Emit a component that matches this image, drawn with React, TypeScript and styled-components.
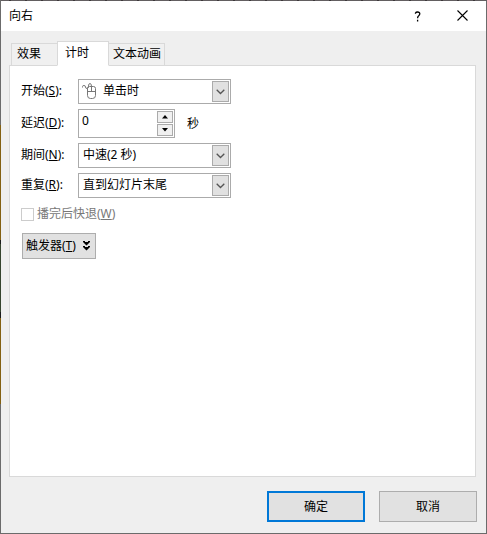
import React, { useState } from "react";
import styled, { createGlobalStyle, css } from "styled-components";

const GlobalStyle = createGlobalStyle`
  *, *::before, *::after { box-sizing: border-box; }
  body { margin: 0; background: #6b6b6b; }
  body, button, input, select {
    font-family: "Noto Sans", "Noto Sans CJK SC", sans-serif;
    font-size: 12px;
    line-height: 16px;
    color: #000;
  }
`;

const Frame = styled.div`
  min-height: 100vh;
  padding: 1px;
  display: flex;
  background:
    linear-gradient(
      #6b6b6b 125px, #846112 125px, #846112 240px, #1c1c1c 240px, #1c1c1c 244px,
      #36452f 244px, #36452f 312px, #1c1c1c 312px, #1c1c1c 318px,
      #846112 318px, #846112 404px, #6b6b6b 404px
    ) left / 1px 100% no-repeat,
    repeating-linear-gradient(90deg, #625e60 0 9px, #3c383a 9px 11px, #625e60 11px 16px) top / 100% 1px no-repeat,
    #6b6b6b;
`;

const Dialog = styled.main`
  flex: 1;
  display: flex;
  flex-direction: column;
  background: #efefef;
`;

const TitleBar = styled.header`
  display: flex;
  align-items: center;
  height: 30px;
  padding-left: 8px;
  background: #fff;
`;

const Title = styled.h1`
  flex: 1;
  margin: 0;
  font-size: 12px;
  font-weight: 400;
`;

const TitleButton = styled.button`
  display: grid;
  place-items: center;
  width: 46px;
  height: 28px;
  padding: 0;
  border: 0;
  background: none;
`;

const Content = styled.div`
  flex: 1;
  display: flex;
  flex-direction: column;
  padding: 10px 10px 0 8px;
`;

const TabList = styled.div`
  display: flex;
  align-items: flex-end;
  height: 25px;
  padding-left: 2px;
  margin-bottom: -1px;
`;

const Tab = styled.button<{ $active: boolean }>`
  height: 23px;
  padding: 0 4px 1px;
  margin-right: -1px;
  border: 1px solid #d9d9d9;
  background: #f0f0f0;
  white-space: nowrap;

  &:first-child { padding-right: 16px; padding-left: 5px; }
  &:last-child { padding-right: 3px; }

  ${({ $active }) =>
    $active &&
    css`
      z-index: 1;
      height: 25px;
      padding: 0 19px 2px 7px;
      border-bottom-color: #fff;
      background: #fff;
    `}
`;

const Panel = styled.section`
  flex: 1;
  padding: 13px 12px 20px 11px;
  border: 1px solid #d9d9d9;
  background: #fff;
`;

const Fields = styled.div`
  display: grid;
  grid-template-columns: 57px 153px auto;
  justify-content: start;
  align-items: center;
  row-gap: 5px;
`;

const FieldLabel = styled.label`
  grid-column: 1;
  padding-bottom: 2px;
  white-space: nowrap;
`;

const SelectBox = styled.div`
  display: grid;
  grid-template: 25px / 1fr 19px;
  align-items: center;

  > svg { pointer-events: none; }
`;

const SelectInput = styled.select<{ $withIcon?: boolean }>`
  grid-area: 1 / 1 / 2 / 3;
  width: 100%;
  height: 25px;
  padding: 0 20px 1px ${({ $withIcon }) => ($withIcon ? "24px" : "4px")};
  border: 1px solid #ababab;
  border-radius: 0;
  background: #fff;
  appearance: none;
`;

const MouseGlyph = styled.svg`
  grid-area: 1 / 1;
  margin-left: 3px;
`;

const DropMark = styled.span`
  grid-area: 1 / 2;
  display: grid;
  place-items: center;
  width: 17px;
  height: 21px;
  border: 1px solid #ababab;
  background: #e1e1e1;
  pointer-events: none;
`;

const Spinner = styled.div`
  display: flex;
  width: 97px;
  height: 29px;
  padding: 1px;
  border: 1px solid #ababab;
  background: #fff;
`;

const SpinnerInput = styled.input`
  flex: 1;
  min-width: 0;
  padding: 0 2px 5px;
  border: 0;
  outline: 0;
  background: none;
`;

const SpinnerButtons = styled.div`
  display: grid;
  grid-template-rows: 12px 12px;
  row-gap: 1px;
  width: 16px;
`;

const SpinnerButton = styled.button`
  display: grid;
  place-items: center;
  padding: 0;
  border: 1px solid #ababab;
  background: #f0f0f0;
`;

const DelayCell = styled.div`
  display: flex;
  align-items: center;
  gap: 12px;
`;

const CheckLabel = styled.label`
  display: flex;
  align-items: center;
  gap: 3px;
  margin-top: 8px;
  height: 16px;
  color: #777;
`;

const CheckBox = styled.input`
  width: 13px;
  height: 13px;
  margin: 0;
  border: 1px solid #ccc;
  background: #fff;
  appearance: none;
`;

const TriggerButton = styled.button`
  display: flex;
  align-items: center;
  gap: 6px;
  height: 26px;
  margin: 11px 0 0 1px;
  padding: 0 4px 0 3px;
  border: 1px solid #adadad;
  background: #e1e1e1;
  white-space: nowrap;
`;

const Footer = styled.footer`
  display: flex;
  justify-content: flex-end;
  gap: 14px;
  padding: 14px 9px 11px;
`;

const ActionButton = styled.button<{ $primary?: boolean }>`
  width: 98px;
  height: 31px;
  padding: 0;
  border: ${({ $primary }) => ($primary ? "2px solid #0078d7" : "1px solid #adadad")};
  background: #e1e1e1;
`;

type DropDownProps = { id: string; options: string[]; icon?: boolean };

function DropDown({ id, options, icon }: DropDownProps) {
  return (
    <SelectBox>
      <SelectInput id={id} $withIcon={icon}>
        {options.map((o) => (
          <option key={o}>{o}</option>
        ))}
      </SelectInput>
      {icon && (
        <MouseGlyph width="17" height="19" viewBox="0 0 17 19" fill="none" stroke="#777" aria-hidden="true">
          <path d="M1.5 5.5V4.5Q1.5 3.5 3 3.5Q4.5 3.5 4.5 5T6 6.5Q7.5 6.5 7.5 4Q7.5 1.5 9 1.5Q10.5 1.5 10.5 4.5" />
          <path d="M8.5 4.5H12.5Q14.5 4.5 14.5 6.5V13.5Q14.5 16.5 11.5 16.5H9.5Q6.5 16.5 6.5 13.5V6.5Q6.5 4.5 8.5 4.5ZM6.5 9.5H14.5M10.5 4.5V9.5" />
        </MouseGlyph>
      )}
      <DropMark>
        <svg width="9" height="6" viewBox="0 0 9 6" fill="none" stroke="#555" strokeWidth="1.3" aria-hidden="true">
          <path d="M.7.7L4.5 4.5L8.3.7" />
        </svg>
      </DropMark>
    </SelectBox>
  );
}

const tabs = ["效果", "计时", "文本动画"];

export default function App() {
  const [active, setActive] = useState(1);
  const [delay, setDelay] = useState("0");
  const step = (by: number) => setDelay(String(Math.max(0, (Number(delay) || 0) + by)));

  return (
    <>
      <GlobalStyle />
      <Frame>
        <Dialog>
          <TitleBar>
            <Title>向右</Title>
            <TitleButton aria-label="帮助">
              <svg width="8" height="11" viewBox="0 0 8 11" fill="none" stroke="#000" strokeWidth="1.3" aria-hidden="true">
                <path d="M2.5 2.7V2Q3 1 4.6 1Q6.8 1 6.8 2.8Q6.8 3.9 5.7 4.8Q4.6 5.6 4.6 7.2M4.6 8.8V10.4" />
              </svg>
            </TitleButton>
            <TitleButton aria-label="关闭">
              <svg width="12" height="12" viewBox="0 0 12 12" stroke="#000" strokeWidth="1.1" aria-hidden="true">
                <path d="M.5.5L10.5 10.5M10.5.5L.5 10.5" />
              </svg>
            </TitleButton>
          </TitleBar>

          <Content>
            <TabList role="tablist">
              {tabs.map((name, i) => (
                <Tab key={name} role="tab" aria-selected={i === active} $active={i === active} onClick={() => setActive(i)}>
                  {name}
                </Tab>
              ))}
            </TabList>
            <Panel role="tabpanel" aria-label={tabs[active]}>
              <Fields>
                <FieldLabel htmlFor="start">开始(<u>S</u>):</FieldLabel>
                <DropDown id="start" options={["单击时"]} icon />

                <FieldLabel htmlFor="delay">延迟(<u>D</u>):</FieldLabel>
                <DelayCell>
                  <Spinner>
                    <SpinnerInput id="delay" value={delay} onChange={(e) => setDelay(e.target.value)} />
                    <SpinnerButtons>
                      <SpinnerButton aria-label="增加" onClick={() => step(1)}>
                        <svg width="6" height="4" viewBox="0 0 6 4" aria-hidden="true"><path d="M0 3.5L3 0L6 3.5Z" /></svg>
                      </SpinnerButton>
                      <SpinnerButton aria-label="减少" onClick={() => step(-1)}>
                        <svg width="6" height="4" viewBox="0 0 6 4" aria-hidden="true"><path d="M0 0L3 3.5L6 0Z" /></svg>
                      </SpinnerButton>
                    </SpinnerButtons>
                  </Spinner>
                  <span>秒</span>
                </DelayCell>

                <FieldLabel htmlFor="duration">期间(<u>N</u>):</FieldLabel>
                <DropDown id="duration" options={["中速(2 秒)"]} />

                <FieldLabel htmlFor="repeat">重复(<u>R</u>):</FieldLabel>
                <DropDown id="repeat" options={["直到幻灯片末尾"]} />
              </Fields>

              <CheckLabel>
                <CheckBox type="checkbox" disabled />
                <span>播完后快退(<u>W</u>)</span>
              </CheckLabel>

              <TriggerButton>
                <span>触发器(<u>T</u>)</span>
                <svg width="9" height="10" viewBox="0 0 9 10" aria-hidden="true">
                  <path d="M1 0H3V1H6V0H8V1L4.5 4.5L1 1ZM1 5H3V6H6V5H8V6L4.5 9.5L1 6Z" />
                </svg>
              </TriggerButton>
            </Panel>
          </Content>

          <Footer>
            <ActionButton $primary>确定</ActionButton>
            <ActionButton>取消</ActionButton>
          </Footer>
        </Dialog>
      </Frame>
    </>
  );
}
